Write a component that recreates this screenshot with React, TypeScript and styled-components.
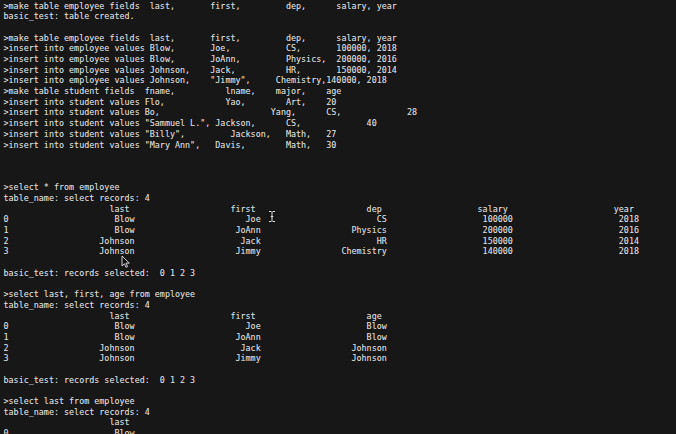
import React from "react";
import styled, { createGlobalStyle } from "styled-components";

const GlobalStyle = createGlobalStyle`
  html, body {
    margin: 0;
    padding: 0;
    background: #171717;
  }
  body {
    width: 676px;
    height: 434px;
    overflow: hidden;
  }
`;

const Screen = styled.div`
  position: relative;
  width: 676px;
  height: 434px;
  box-sizing: border-box;
  padding: 0.6px 0 0 3.5px;
  background: #171717;
  overflow: hidden;
  display: flex;
  flex-direction: column;
`;

const Line = styled.div`
  height: 10.7px;
  line-height: 10.7px;
  white-space: pre;
  font-family: "DejaVu Sans Mono", monospace;
  font-size: 8.35px;
  letter-spacing: 0.02px;
  color: #d6d6d6;
  text-shadow: 0 0 0.5px rgba(214, 214, 214, 0.55);
  flex-shrink: 0;
`;

const IBeam = styled.svg`
  position: absolute;
  left: 268px;
  top: 210px;
`;

const Arrow = styled.svg`
  position: absolute;
  left: 121px;
  top: 255px;
`;

type Tok = [number, string];

function place(prefix: string, toks: Tok[]): string {
  let s = prefix;
  for (const [col, text] of toks) {
    if (s.length < col) s += " ".repeat(col - s.length);
    s += text;
  }
  return s;
}

const EMP = ">insert into employee values ";
const STU = ">insert into student values ";

const commandLines: string[] = [
  place(">make table employee fields", [[29, "last,"], [41, "first,"], [56, "dep,"], [66, "salary,"], [74, "year"]]),
  "basic_test: table created.",
  "",
  place(">make table employee fields", [[29, "last,"], [41, "first,"], [56, "dep,"], [66, "salary,"], [74, "year"]]),
  place(EMP, [[29, "Blow,"], [41, "Joe,"], [56, "CS,"], [66, "100000,"], [74, "2018"]]),
  place(EMP, [[29, "Blow,"], [41, "JoAnn,"], [56, "Physics,"], [66, "200000,"], [74, "2016"]]),
  place(EMP, [[29, "Johnson,"], [41, "Jack,"], [56, "HR,"], [66, "150000,"], [74, "2014"]]),
  place(EMP, [[29, "Johnson,"], [41, "\"Jimmy\","], [54, "Chemistry,140000,"], [72, "2018"]]),
  place(">make table student fields", [[28, "fname,"], [44, "lname,"], [54, "major,"], [64, "age"]]),
  place(STU, [[28, "Flo,"], [44, "Yao,"], [56, "Art,"], [64, "20"]]),
  place(STU, [[28, "Bo,"], [53, "Yang,"], [64, "CS,"], [80, "28"]]),
  place(STU, [[28, "\"Sammuel L.\","], [42, "Jackson,"], [56, "CS,"], [72, "40"]]),
  place(STU, [[28, "\"Billy\","], [45, "Jackson,"], [56, "Math,"], [64, "27"]]),
  place(STU, [[28, "\"Mary Ann\","], [42, "Davis,"], [56, "Math,"], [64, "30"]]),
  "",
  "",
  "",
];

const W = 25;
const header = (cols: string[]) => cols.map((c) => c.padStart(W)).join("");
const row = (i: number, vals: string[]) => String(i) + vals.map((v) => v.padStart(W)).join("");

const employees = [
  ["Blow", "Joe", "CS", "100000", "2018"],
  ["Blow", "JoAnn", "Physics", "200000", "2016"],
  ["Johnson", "Jack", "HR", "150000", "2014"],
  ["Johnson", "Jimmy", "Chemistry", "140000", "2018"],
];

const selectBlock = (cmd: string, cols: string[], pick: (r: string[]) => string[], rows: number) => [
  cmd,
  "table_name: select records: 4",
  header(cols),
  ...employees.slice(0, rows).map((r, i) => row(i, pick(r))),
];

const lines: string[] = [
  ...commandLines,
  ...selectBlock(">select * from employee", ["last", "first", "dep", "salary", "year"], (r) => r, 4),
  "",
  "basic_test: records selected:  0 1 2 3",
  "",
  ...selectBlock(">select last, first, age from employee", ["last", "first", "age"], (r) => [r[0], r[1], r[0]], 4),
  "",
  "basic_test: records selected:  0 1 2 3",
  "",
  ...selectBlock(">select last from employee", ["last"], (r) => [r[0]], 1),
];

export default function App() {
  return (
    <>
      <GlobalStyle />
      <Screen>
        {lines.map((l, i) => (
          <Line key={i}>{l}</Line>
        ))}
        <IBeam width="8" height="13" viewBox="0 0 8 13">
          <path d="M1 1.5h2v4.5h-1v1h1v4.5h-2M7 1.5h-2v4.5h1v1h-1v4.5h2M4 1.5v10" stroke="#111" strokeWidth="2.2" fill="none" />
          <path d="M1 1.5h2.3M4.7 1.5h2.3M1 11.5h2.3M4.7 11.5h2.3M4 1.5v10M2.7 6.5h2.6" stroke="#e8e8e8" strokeWidth="1" fill="none" />
        </IBeam>
        <Arrow width="9" height="13" viewBox="0 0 9 13">
          <path d="M1 1v10l2.4-2.3 1.6 3.6 1.6-0.7-1.6-3.5h3.3z" fill="#111" stroke="#e8e8e8" strokeWidth="0.9" strokeLinejoin="round" />
        </Arrow>
      </Screen>
    </>
  );
}
